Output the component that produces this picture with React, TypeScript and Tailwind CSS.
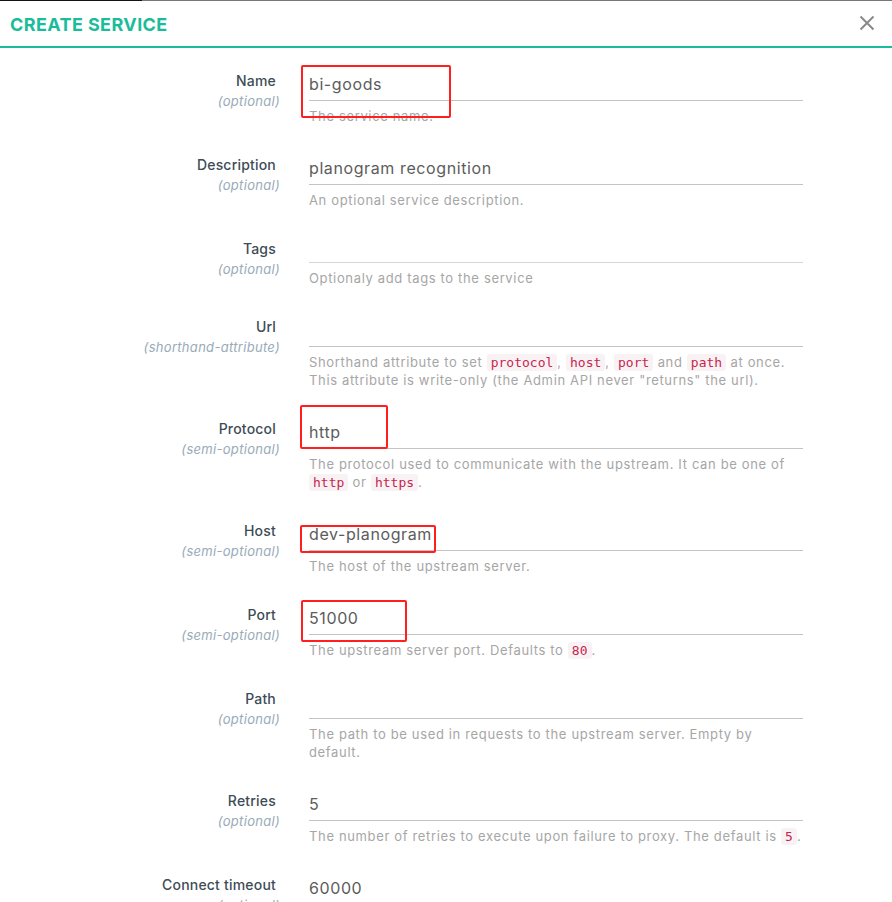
import React from "react";

type Field = {
  label: string;
  hint: string;
  value?: string;
  short?: boolean;
  help: React.ReactNode;
};

function Code({ children }: { children: React.ReactNode }) {
  return (
    <code className="rounded-[3px] bg-[#f9f2f4] px-[4px] py-[1px] font-['DejaVu_Sans_Mono',monospace] text-[13px] leading-[14px] tracking-normal text-[#c7254e]">
      {children}
    </code>
  );
}

const fields: Field[] = [
  { label: "Name", hint: "(optional)", value: "bi-goods", help: "The service name." },
  { label: "Description", hint: "(optional)", value: "planogram recognition", help: "An optional service description." },
  { label: "Tags", hint: "(optional)", short: true, help: "Optionaly add tags to the service" },
  {
    label: "Url",
    hint: "(shorthand-attribute)",
    help: (
      <>
        Shorthand attribute to set <Code>protocol</Code>, <Code>host</Code>, <Code>port</Code> and <Code>path</Code> at once.
        <br />
        This attribute is write-only (the Admin API never "returns" the url).
      </>
    ),
  },
  {
    label: "Protocol",
    hint: "(semi-optional)",
    value: "http",
    help: (
      <>
        The protocol used to communicate with the upstream. It can be one of
        <br />
        <Code>http</Code> or <Code>https</Code>.
      </>
    ),
  },
  { label: "Host", hint: "(semi-optional)", value: "dev-planogram", help: "The host of the upstream server." },
  {
    label: "Port",
    hint: "(semi-optional)",
    value: "51000",
    help: (
      <>
        The upstream server port. Defaults to <Code>80</Code>.
      </>
    ),
  },
  {
    label: "Path",
    hint: "(optional)",
    help: (
      <>
        The path to be used in requests to the upstream server. Empty by
        <br />
        default.
      </>
    ),
  },
  {
    label: "Retries",
    hint: "(optional)",
    value: "5",
    help: (
      <>
        The number of retries to execute upon failure to proxy. The default is <Code>5</Code>.
      </>
    ),
  },
  {
    label: "Connect timeout",
    hint: "(optional)",
    value: "60000",
    help: "The timeout in milliseconds for establishing a connection to the upstream server.",
  },
];

// red annotation boxes drawn over the screenshot
const marks = [
  { left: 301, top: 65, w: 150, h: 53 },
  { left: 300, top: 405, w: 88, h: 44 },
  { left: 300, top: 525, w: 136, h: 28 },
  { left: 301, top: 600, w: 106, h: 42 },
];

export default function App() {
  return (
    <div className="relative h-screen overflow-hidden bg-white font-['Inter',sans-serif]">
      <div className="flex h-px">
        <div className="w-[142px] bg-[#0f141a]"></div>
        <div className="flex-1 bg-[#777]"></div>
      </div>

      {/* Header */}
      <div className="flex h-[47px] items-center justify-between border-b-2 border-[#1abc9c] pl-[10px] pr-[17px] pt-[2px]">
        <h2 className="text-[18px] font-bold tracking-[0.4px] text-[#1abc9c]">CREATE SERVICE</h2>
        <svg width="16" height="16" viewBox="0 0 16 16" className="mb-[3px]">
          <path d="M1.5 1.5 L14.5 14.5 M14.5 1.5 L1.5 14.5" stroke="#8a8a8a" strokeWidth="2" />
        </svg>
      </div>

      {/* Form */}
      <div className="pt-[22px]">
        {fields.map((f) => (
          <div key={f.label} className="mb-[29px] flex">
            <div className="w-[280px] shrink-0 text-right">
              <div className="pr-[4px] text-[14px] font-medium leading-[21px] tracking-[0.2px] text-[#3e4c56]">{f.label}</div>
              <div className="text-[13px] italic leading-[21px] tracking-[0.3px] text-[#98abb9]">{f.hint}</div>
            </div>
            <div className="ml-[29px] w-[494px]">
              <div
                className={
                  f.short
                    ? "h-[25px] border-b border-[#d6d6d6]"
                    : "h-[31px] border-b-[1.5px] border-[#c4c4c4] pt-[1px] text-[16px] leading-[27px] tracking-[0.6px] text-[#5c5c5c]"
                }
              >
                {f.value}
              </div>
              <div className="mt-[6px] text-[13px] leading-[18px] tracking-[0.65px] text-[#a6a6a6]">{f.help}</div>
            </div>
          </div>
        ))}
      </div>

      {marks.map((m, i) => (
        <div
          key={i}
          className="absolute rounded-[2px] border-[2.5px] border-[#ff1f1f]"
          style={{ left: m.left, top: m.top, width: m.w, height: m.h }}
        ></div>
      ))}
    </div>
  );
}
